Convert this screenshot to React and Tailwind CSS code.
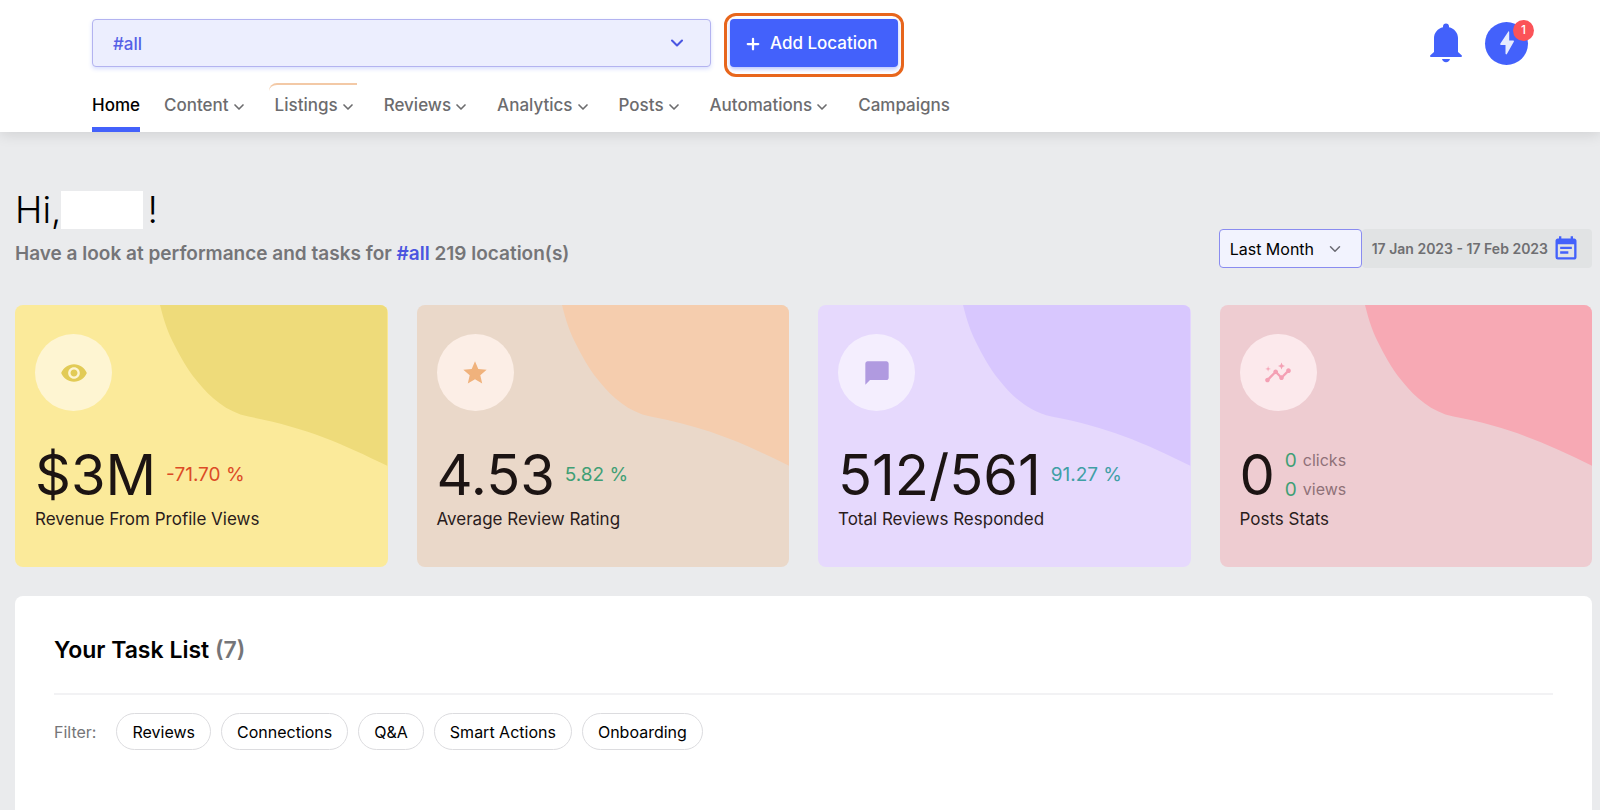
import React, { useState } from 'react';
import { MdVisibility, MdStar, MdChatBubble, MdInsights, MdEventNote } from 'react-icons/md';
import { ChevronDown, Plus } from 'lucide-react';

const NAV_ITEMS = [
  { name: 'Home', active: true },
  { name: 'Content', menu: true },
  { name: 'Listings', menu: true, marked: true },
  { name: 'Reviews', menu: true },
  { name: 'Analytics', menu: true },
  { name: 'Posts', menu: true },
  { name: 'Automations', menu: true },
  { name: 'Campaigns' },
];

const CARDS = [
  {
    label: 'Revenue From Profile Views',
    value: '$3M',
    change: '-71.70 %',
    changeColor: 'text-[#dc4a26]',
    bg: 'bg-[#fbea9a]',
    blob: 'text-[#eedb7a]',
    circle: 'bg-[#fef5d2]',
    iconColor: 'text-[#e2cb56]',
    Icon: MdVisibility,
  },
  {
    label: 'Average Review Rating',
    value: '4.53',
    change: '5.82 %',
    changeColor: 'text-[#3f9f75]',
    bg: 'bg-[#ead8c9]',
    blob: 'text-[#f5cdae]',
    circle: 'bg-[#fceee6]',
    iconColor: 'text-[#f0b27c]',
    Icon: MdStar,
  },
  {
    label: 'Total Reviews Responded',
    value: '512/561',
    change: '91.27 %',
    changeColor: 'text-[#3f9fa5]',
    bg: 'bg-[#e6d9fd]',
    blob: 'text-[#d8c7fe]',
    circle: 'bg-[#f4eefe]',
    iconColor: 'text-[#b09ae0]',
    Icon: MdChatBubble,
  },
  {
    label: 'Posts Stats',
    value: '0',
    stats: [
      { count: 0, unit: 'clicks' },
      { count: 0, unit: 'views' },
    ],
    bg: 'bg-[#eeccd1]',
    blob: 'text-[#f7a9b4]',
    circle: 'bg-[#fce9ec]',
    iconColor: 'text-[#f4a0b4]',
    Icon: MdInsights,
  },
];

const FILTERS = ['Reviews', 'Connections', 'Q&A', 'Smart Actions', 'Onboarding'];

const BellIcon = () => (
  <svg width="34" height="40" viewBox="0 0 34 40" fill="currentColor" aria-hidden="true">
    <path d="M17 0.5c1.8 0 3 1.2 3 2.9v0.800c5.300 1.300 9 5.500 9 10.900v13.900l3.600 3.200c0.700 0.700 0.400 1.800-0.600 1.800H2c-1 0-1.300-1.100-0.600-1.800L5 29V15.100C5 9.700 8.700 5.500 14 4.200V3.400c0-1.700 1.200-2.900 3-2.900z" />
    <path d="M13 36h8c-0.400 2-2 3.200-4 3.200s-3.600-1.200-4-3.200z" />
  </svg>
);

const BoltIcon = () => (
  <svg width="16" height="24" viewBox="0 0 16 24" fill="currentColor" aria-hidden="true">
    <path d="M9.200 0.700 1.400 12.500c-0.500 0.800 0 1.500 0.800 1.500h4.300v8.600c0 0.900 0.900 1.100 1.400 0.400l6.900-12.200c0.400-0.700 0-1.400-0.800-1.400H10.200V1c0-0.700-0.700-0.900-1-0.300z" />
  </svg>
);

const NavItem = ({ item }) => (
  <li
    className={
      item.active
        ? 'flex border-b-5 border-[#4361fb] text-black'
        : 'relative flex border-b-5 border-transparent text-[#6c6c6e]'
    }
  >
    {item.marked && (
      <span className="absolute -left-1.5 top-0 h-2 w-[88px] rounded-tl-lg border-t-2 border-[#f3c9a6]" />
    )}
    <a href="#" className="flex items-center gap-0.5 pt-0.5">
      {item.name}
      {item.menu && <ChevronDown size={16} strokeWidth={2.5} className="mr-1 mt-0.5" />}
    </a>
  </li>
);

const StatCard = ({ card }) => (
  <section className={`relative overflow-hidden rounded-lg px-5 pb-9 pt-[29px] ${card.bg}`}>
    <svg
      className={`absolute right-0 top-0 w-[61%] ${card.blob}`}
      viewBox="0 0 226 160"
      fill="currentColor"
      aria-hidden="true"
    >
      <path d="M0 0C4 16 8 28 15 41C22 55 30 68 38 77C50 92 66 106 88 111C142 121 180 137 226 160V0Z" />
    </svg>
    <div className={`relative flex h-[77px] w-[77px] items-center justify-center rounded-full ${card.circle}`}>
      <card.Icon size={28} className={card.iconColor} />
    </div>
    <div className="relative mt-8 flex h-16 items-center gap-2.5">
      <span className="text-[56px] leading-16 text-[#1c1413]">{card.value}</span>
      {card.change && <span className={`text-[19px] ${card.changeColor}`}>{card.change}</span>}
      {card.stats && (
        <ul>
          {card.stats.map((s) => (
            <li key={s.unit} className="flex items-center gap-1.5 text-[16px] leading-[29px] text-[#8f7178]">
              <span className="text-[19px] text-[#3f9f75]">{s.count}</span>
              {s.unit}
            </li>
          ))}
        </ul>
      )}
    </div>
    <h2 className="relative text-[17px] leading-6 text-[#2a1c1c]">{card.label}</h2>
  </section>
);

const Dashboard = () => {
  const [filter, setFilter] = useState(null);

  return (
    <div className="flex min-h-screen flex-col bg-[#eaebed] font-['Inter',sans-serif]">
      <header className="relative bg-white pl-[92px] pr-[72px] pt-[19px] shadow-[0_2px_14px_rgba(0,0,0,0.12)]">
        <div className="flex h-12 items-center justify-between">
          <div className="flex items-start">
            <div className="relative w-[619px]">
              <select
                aria-label="Location group"
                className="h-12 w-full appearance-none rounded border border-[#b3b3f0] bg-[#eceefe] px-5 pt-1 text-[17px] font-medium text-[#5560e6] shadow-[0_2px_4px_rgba(67,97,251,0.2)]"
              >
                <option>#all</option>
              </select>
              <ChevronDown
                size={20}
                strokeWidth={2.5}
                className="pointer-events-none absolute right-6 top-[14px] text-[#4a56e2]"
              />
            </div>
            <div className="-mb-2.5 -mt-1.5 ml-[13px] rounded-xl border-3 border-[#e8661c] px-[3px] pb-[7px] pt-[3px]">
              <button className="flex h-12 items-center gap-2 rounded bg-[#4361fb] pl-[14px] pr-5 pt-0.5 text-[17px] font-medium text-white shadow-[0_2px_4px_rgba(67,97,251,0.4)]">
                <Plus size={18} strokeWidth={3} />
                Add Location
              </button>
            </div>
          </div>
          <div className="flex items-center gap-[22px] text-[#4361fb]">
            <button aria-label="Notifications">
              <BellIcon />
            </button>
            <button
              aria-label="Actions"
              className="relative flex h-[43px] w-[43px] items-center justify-center rounded-full bg-[#4361fb] text-[#e6ebfe]"
            >
              <BoltIcon />
              <span className="absolute -right-1.5 -top-0.5 flex h-[21px] w-[21px] items-center justify-center rounded-full bg-[#fb5358] text-xs font-medium text-white">
                1
              </span>
            </button>
          </div>
        </div>
        <nav className="mt-4">
          <ul className="flex h-[49px] gap-6 text-[17px] font-medium">
            {NAV_ITEMS.map((item) => (
              <NavItem key={item.name} item={item} />
            ))}
          </ul>
        </nav>
      </header>

      <main className="flex flex-1 flex-col pl-[15px] pr-2 pt-[54px]">
        <div className="flex items-end justify-between">
          <div>
            <h1 className="flex h-12 items-center text-[37px] font-light text-black">
              Hi,
              <span className="mr-1 h-[38px] w-[82px] bg-white" />!
            </h1>
            <p className="mt-1.5 text-[19px] font-semibold leading-7 text-[#757578]">
              Have a look at performance and tasks for <a href="#" className="text-[#4b55e0]">#all</a> 219
              location(s)
            </p>
          </div>
          <div className="flex">
            <div className="relative">
              <select
                aria-label="Period"
                className="h-[39px] w-[143px] appearance-none rounded border border-[#8a8cf0] bg-[#f2f3fe] pl-2.5 text-[16px] text-black"
              >
                <option>Last Month</option>
              </select>
              <ChevronDown
                size={18}
                className="pointer-events-none absolute right-[18px] top-[11px] text-[#6a6a72]"
              />
            </div>
            <button className="flex h-[39px] items-center gap-1 rounded bg-[#e1e3e4] pl-2.5 pr-3 text-[14px] font-semibold text-[#6f6f72]">
              17 Jan 2023 - 17 Feb 2023
              <MdEventNote size={28} className="text-[#4361fb]" />
            </button>
          </div>
        </div>

        <div className="mt-[37px] grid grid-cols-4 gap-[29px]">
          {CARDS.map((card) => (
            <StatCard key={card.label} card={card} />
          ))}
        </div>

        <section className="mt-[29px] flex-1 rounded-t-lg bg-white px-[39px] pt-[38px]">
          <h2 className="text-[23px] font-semibold leading-8 text-black">
            Your Task List <span className="text-[#757578]">(7)</span>
          </h2>
          <hr className="mt-[27px] border-t-2 border-[#f2f2f4]" />
          <div className="mt-[18px] flex items-center gap-2.5">
            <span className="mr-2.5 text-[16px] text-[#757578]">Filter:</span>
            {FILTERS.map((name) => (
              <button
                key={name}
                onClick={() => setFilter(filter === name ? null : name)}
                aria-pressed={filter === name}
                className="h-[37px] rounded-full border border-[#dcdcdf] px-[15px] text-[16px] text-black"
              >
                {name}
              </button>
            ))}
          </div>
        </section>
      </main>
    </div>
  );
};

export default Dashboard;
